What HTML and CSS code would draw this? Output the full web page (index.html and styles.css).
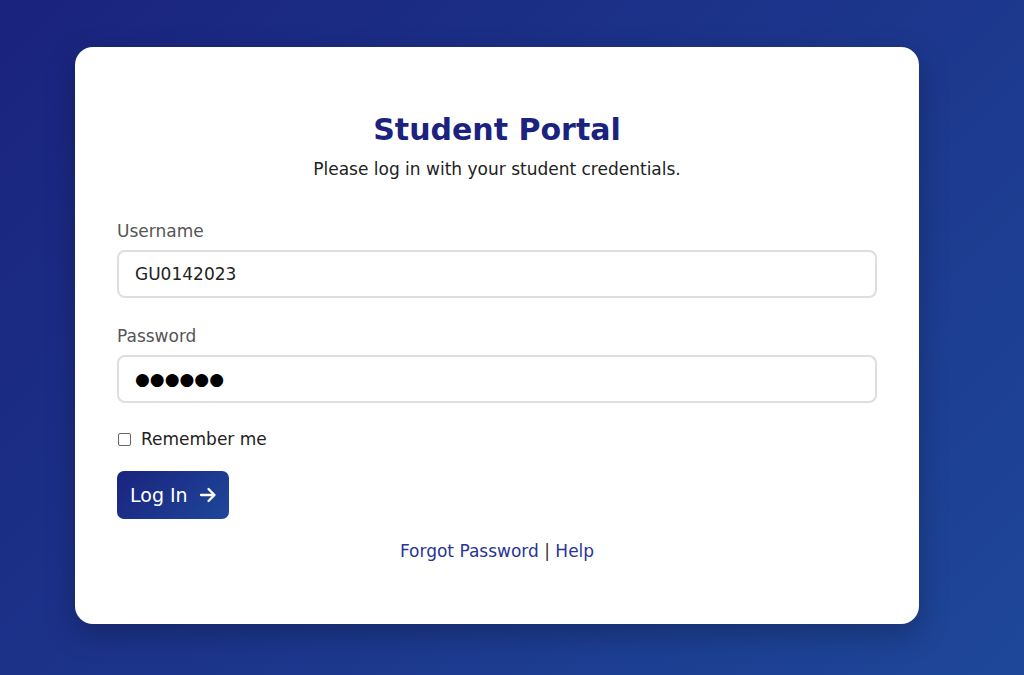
FILE: index.html
```html
<!DOCTYPE html>
<html lang="en">
<head>
<meta charset="utf-8">
<title>Student Portal</title>
<link rel="stylesheet" href="styles.css">
</head>
<body>
<main class="page">
  <form class="card">
    <h1 class="title">Student Portal</h1>
    <p class="subtitle">Please log in with your student credentials.</p>

    <div class="field">
      <label class="label" for="username">Username</label>
      <input class="input" id="username" type="text" value="GU0142023">
    </div>

    <div class="field">
      <label class="label" for="password">Password</label>
      <div class="input input-pass" id="password">●●●●●●</div>
    </div>

    <label class="remember">
      <span class="checkbox"></span>
      <span>Remember me</span>
    </label>

    <button class="btn" type="button">
      <span>Log In</span>
      <svg class="arrow" width="18" height="18" viewBox="0 0 18 18" fill="none" stroke="#fff" stroke-width="2.3" stroke-linecap="round" stroke-linejoin="round"><path d="M2 9h13.5M9.5 3L15.5 9l-6 6"/></svg>
    </button>

    <p class="links"><a href="#">Forgot Password</a> | <a href="#">Help</a></p>
  </form>
</main>
</body>
</html>
```
FILE: styles.css
```css
* { box-sizing: border-box; }
html, body { height: 100%; }
body {
  margin: 0;
  font-family: "DejaVu Sans", "Liberation Sans", sans-serif;
  background: linear-gradient(135deg, #1a237e 0%, #1e4799 100%);
  color: #222;
  overflow: hidden;
}
.page {
  padding: 47px 0 0 75px;
}
.card {
  width: 844px;
  height: 577px;
  background: #fff;
  border-radius: 18px;
  box-shadow: 0 10px 30px rgba(0, 0, 0, 0.25);
  padding: 65px 42px 0;
  display: flex;
  flex-direction: column;
}
.title {
  margin: 0;
  text-align: center;
  font-size: 30px;
  line-height: 35px;
  font-weight: bold;
  color: #1a237e;
}
.subtitle {
  margin: 12px 0 0;
  text-align: center;
  font-size: 17px;
  line-height: 20px;
  color: #222;
}
.field {
  display: flex;
  flex-direction: column;
}
.field:first-of-type { margin-top: 42px; }
.field + .field { margin-top: 28px; }
.label {
  font-size: 17px;
  line-height: 20px;
  color: #555;
  margin-bottom: 9px;
}
.input {
  height: 48px;
  width: 100%;
  border: 2px solid #dedede;
  border-radius: 8px;
  padding: 0 16px;
  font-family: inherit;
  font-size: 17px;
  color: #222;
  background: #fff;
  outline: none;
}
.input-pass {
  display: flex;
  align-items: center;
  font-size: 17px;
  letter-spacing: 0;
  color: #000;
}
.remember {
  margin-top: 26px;
  display: flex;
  align-items: center;
  gap: 10px;
  font-size: 17px;
  line-height: 20px;
  color: #222;
}
.checkbox {
  width: 13px;
  height: 13px;
  border: 1.5px solid #666;
  border-radius: 2px;
  margin-left: 1px;
}
.btn {
  margin-top: 22px;
  align-self: flex-start;
  height: 48px;
  padding: 0 12px 0 13px;
  display: flex;
  align-items: center;
  gap: 11px;
  border: none;
  border-radius: 7px;
  background: linear-gradient(135deg, #1a237e 0%, #1e4799 100%);
  color: #fff;
  font-family: inherit;
  font-size: 19px;
}
.arrow { display: block; }
.links {
  margin: 22px 0 0;
  text-align: center;
  font-size: 17px;
  line-height: 20px;
  color: #333;
}
.links a {
  color: #283593;
  text-decoration: none;
}
```
